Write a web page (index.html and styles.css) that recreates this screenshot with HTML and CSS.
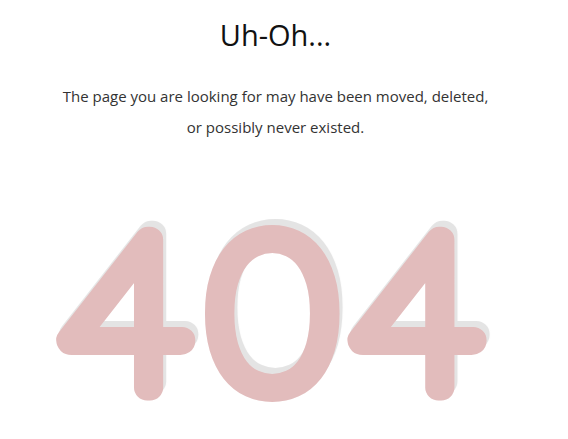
FILE: index.html
```html
<!DOCTYPE html>
<html>
<head>
<meta charset="utf-8">
<link rel="stylesheet" href="styles.css">
</head>
<body>
<main class="page">
  <h1 class="title">Uh-Oh...</h1>
  <p class="message">The page you are looking for may have been moved, deleted,<br>or possibly never existed.</p>
  <svg class="code" width="551" height="252" viewBox="0 0 551 252">
    <defs>
      <filter id="lift" x="-10%" y="-20%" width="120%" height="140%">
        <feDropShadow dx="3" dy="-6" stdDeviation="0" flood-color="#e4e4e4" flood-opacity="1"/>
      </filter>
    </defs>
    <g transform="translate(282 0) scale(1.03 1)">
      <text class="digits" x="0" y="205" filter="url(#lift)">404</text>
    </g>
  </svg>
</main>
</body>
</html>
```
FILE: styles.css
```css
html, body {
  margin: 0;
  padding: 0;
  background: #fff;
  overflow: hidden;
}
.page {
  width: 551px;
  display: flex;
  flex-direction: column;
  align-items: center;
}
.title {
  margin: 18px 0 0;
  font-family: "Open Sans", sans-serif;
  font-weight: 400;
  font-size: 29px;
  line-height: 34px;
  color: #111;
}
.message {
  margin: 29px 0 0;
  font-family: "Open Sans", sans-serif;
  font-size: 15px;
  line-height: 31px;
  color: #333;
  text-align: center;
}
.code {
  display: block;
  margin-top: 40px;
}
.digits {
  font-family: "Lato", sans-serif;
  font-weight: 100;
  font-size: 211px;
  letter-spacing: 19px;
  text-anchor: middle;
  stroke-width: 26px;
  stroke-linejoin: round;
  fill: #e2bcbc;
  stroke: #e2bcbc;
}
```
